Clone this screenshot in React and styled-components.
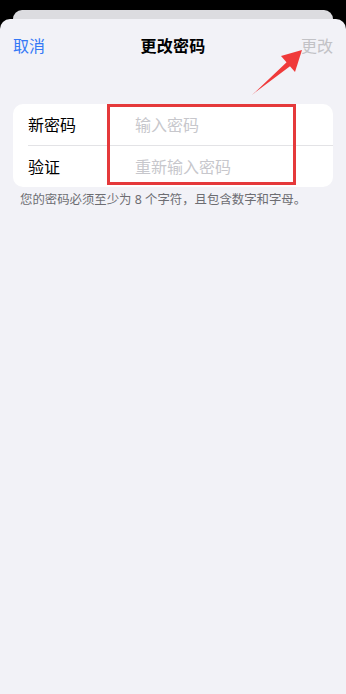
import React from 'react'
import styled, { createGlobalStyle } from 'styled-components'

const Global = createGlobalStyle`
  html, body {
    margin: 0;
    padding: 0;
    background: #000;
  }
  body {
    font-family: "Noto Sans", "Noto Sans CJK SC", sans-serif;
    -webkit-font-smoothing: antialiased;
  }
`

const Screen = styled.div`
  width: 346px;
  height: 694px;
  padding-top: 10px;
  box-sizing: border-box;
  display: flex;
  flex-direction: column;
  overflow: hidden;
`

const BackCard = styled.div`
  height: 9px;
  margin: 0 13px;
  background: #dcdce0;
  border-radius: 10px 10px 0 0;
`

const Sheet = styled.div`
  position: relative;
  flex: 1;
  background: #f2f2f7;
  border-radius: 10px 10px 0 0;
`

const NavBar = styled.div`
  height: 52px;
  padding: 0 13px;
  display: flex;
  align-items: center;
  justify-content: space-between;
  font-size: 16px;
`

const NavButton = styled.span`
  color: ${p => (p.disabled ? '#c2c2c6' : '#3478f6')};
  width: 40px;
  text-align: ${p => (p.right ? 'right' : 'left')};
`

const Title = styled.span`
  font-weight: 700;
  color: #000;
  letter-spacing: 0.2px;
`

const Group = styled.div`
  position: relative;
  margin: 33px 13px 0;
`

const Card = styled.div`
  background: #fff;
  border-radius: 10px;
  overflow: hidden;
`

const Row = styled.div`
  height: 41.5px;
  margin-left: 15px;
  display: flex;
  align-items: center;
  font-size: 16px;
  border-bottom: ${p => (p.last ? 'none' : '0.5px solid #e3e3e6')};
  box-sizing: border-box;
`

const Label = styled.span`
  width: 107px;
  color: #000;
`

const Placeholder = styled.span`
  color: #c7c7cc;
`

const Footnote = styled.p`
  margin: 5px 0 0 20px;
  font-size: 12.4px;
  line-height: 16px;
  color: #6d6d72;
`

const Highlight = styled.div`
  position: absolute;
  left: 94px;
  top: 0;
  width: 189px;
  height: 81px;
  border: 3px solid #e5393b;
  box-sizing: border-box;
`

const Arrow = styled.svg`
  position: absolute;
  left: 0;
  top: 0;
`

export default function App() {
  return (
    <>
      <Global />
      <Screen>
        <BackCard />
        <Sheet>
          <NavBar>
            <NavButton>取消</NavButton>
            <Title>更改密码</Title>
            <NavButton disabled right>更改</NavButton>
          </NavBar>
          <Group>
            <Card>
              <Row>
                <Label>新密码</Label>
                <Placeholder>输入密码</Placeholder>
              </Row>
              <Row last>
                <Label>验证</Label>
                <Placeholder>重新输入密码</Placeholder>
              </Row>
            </Card>
            <Highlight />
          </Group>
          <Footnote>您的密码必须至少为 8 个字符，且包含数字和字母。</Footnote>
          <Arrow width="346" height="90" viewBox="0 0 346 90">
            <polygon points="251.4,76.6 252.6,75.4 291,46.4 287.4,42.4" fill="#f03a3a" />
            <polygon points="302,31 281,37 295,53" fill="#f03a3a" />
          </Arrow>
        </Sheet>
      </Screen>
    </>
  )
}
